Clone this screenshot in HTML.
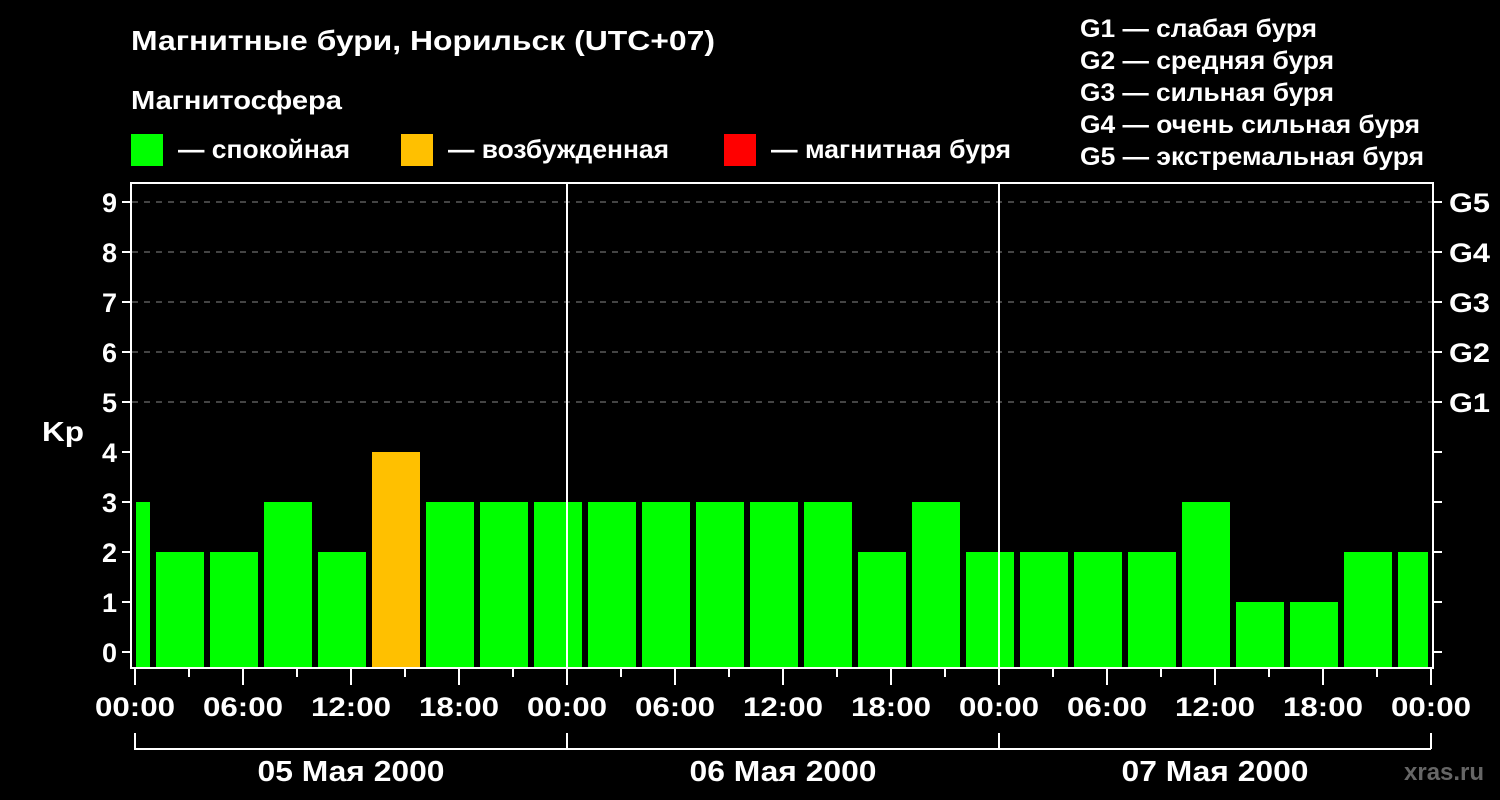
<!DOCTYPE html><html><head><style>body{margin:0;background:#000}svg{display:block}text{font-family:"Liberation Sans",Arial,sans-serif;font-weight:bold;fill:#fff}</style></head><body>
<svg width="1500" height="800" xmlns="http://www.w3.org/2000/svg">
<rect width="1500" height="800" fill="#000"/>
<text x="131" y="50" font-size="28" textLength="584" lengthAdjust="spacingAndGlyphs">Магнитные бури, Норильск (UTC+07)</text>
<text x="131" y="109" font-size="26" textLength="211" lengthAdjust="spacingAndGlyphs">Магнитосфера</text>
<rect x="131" y="134" width="32" height="32" fill="#00ff00"/><text x="178" y="158" font-size="26" textLength="172" lengthAdjust="spacingAndGlyphs">— спокойная</text>
<rect x="401" y="134" width="32" height="32" fill="#ffc000"/><text x="448" y="158" font-size="26" textLength="221" lengthAdjust="spacingAndGlyphs">— возбужденная</text>
<rect x="724" y="134" width="32" height="32" fill="#ff0000"/><text x="771" y="158" font-size="26" textLength="240" lengthAdjust="spacingAndGlyphs">— магнитная буря</text>
<g font-size="25"><text x="1080" y="37" textLength="237" lengthAdjust="spacingAndGlyphs">G1 — слабая буря</text><text x="1080" y="69" textLength="254" lengthAdjust="spacingAndGlyphs">G2 — средняя буря</text><text x="1080" y="101" textLength="254" lengthAdjust="spacingAndGlyphs">G3 — сильная буря</text><text x="1080" y="133" textLength="340" lengthAdjust="spacingAndGlyphs">G4 — очень сильная буря</text><text x="1080" y="165" textLength="344" lengthAdjust="spacingAndGlyphs">G5 — экстремальная буря</text></g>
<g stroke="#888" stroke-width="1" stroke-dasharray="6,6"><line x1="132" y1="202" x2="1433" y2="202"/><line x1="132" y1="252" x2="1433" y2="252"/><line x1="132" y1="302" x2="1433" y2="302"/><line x1="132" y1="352" x2="1433" y2="352"/><line x1="132" y1="402" x2="1433" y2="402"/></g>
<g fill="#00ff00">
<rect x="136" y="502" width="14" height="166"/>
<rect x="156" y="552" width="48" height="116"/><rect x="210" y="552" width="48" height="116"/><rect x="264" y="502" width="48" height="166"/><rect x="318" y="552" width="48" height="116"/>
<rect x="372" y="452" width="48" height="216" fill="#ffc000"/>
<rect x="426" y="502" width="48" height="166"/><rect x="480" y="502" width="48" height="166"/><rect x="534" y="502" width="48" height="166"/><rect x="588" y="502" width="48" height="166"/><rect x="642" y="502" width="48" height="166"/><rect x="696" y="502" width="48" height="166"/><rect x="750" y="502" width="48" height="166"/><rect x="804" y="502" width="48" height="166"/>
<rect x="858" y="552" width="48" height="116"/><rect x="912" y="502" width="48" height="166"/><rect x="966" y="552" width="48" height="116"/><rect x="1020" y="552" width="48" height="116"/><rect x="1074" y="552" width="48" height="116"/><rect x="1128" y="552" width="48" height="116"/><rect x="1182" y="502" width="48" height="166"/><rect x="1236" y="602" width="48" height="66"/><rect x="1290" y="602" width="48" height="66"/><rect x="1344" y="552" width="48" height="116"/><rect x="1398" y="552" width="30" height="116"/>
</g>
<g stroke="#fff" stroke-width="2" fill="none">
<rect x="131" y="183" width="1302" height="485"/>
<line x1="567" y1="183" x2="567" y2="668"/><line x1="999" y1="183" x2="999" y2="668"/>
<path d="M122 202h9M122 252h9M122 302h9M122 352h9M122 402h9M122 452h9M122 502h9M122 552h9M122 602h9M122 652h9"/>
<path d="M1433 202h9M1433 252h9M1433 302h9M1433 352h9M1433 402h9M1433 452h9M1433 502h9M1433 552h9M1433 602h9M1433 652h9"/>
<path d="M135 668v17M189 668v9M243 668v17M297 668v9M351 668v17M405 668v9M459 668v17M513 668v9M567 668v17M621 668v9M675 668v17M729 668v9M783 668v17M837 668v9M891 668v17M945 668v9M999 668v17M1053 668v9M1107 668v17M1161 668v9M1215 668v17M1269 668v9M1323 668v17M1377 668v9M1431 668v17"/>
<path d="M135 733v16h1296M567 733v16M999 733v16M1431 733v16"/>
</g>
<g font-size="27" text-anchor="end"><text x="117" y="212">9</text><text x="117" y="262">8</text><text x="117" y="312">7</text><text x="117" y="362">6</text><text x="117" y="412">5</text><text x="117" y="462">4</text><text x="117" y="512">3</text><text x="117" y="562">2</text><text x="117" y="612">1</text><text x="117" y="662">0</text></g>
<text x="42" y="441" font-size="28" textLength="42" lengthAdjust="spacingAndGlyphs">Kp</text>
<g font-size="27"><text x="1449" y="212" textLength="41" lengthAdjust="spacingAndGlyphs">G5</text><text x="1449" y="262" textLength="41" lengthAdjust="spacingAndGlyphs">G4</text><text x="1449" y="312" textLength="41" lengthAdjust="spacingAndGlyphs">G3</text><text x="1449" y="362" textLength="41" lengthAdjust="spacingAndGlyphs">G2</text><text x="1449" y="412" textLength="41" lengthAdjust="spacingAndGlyphs">G1</text></g>
<g font-size="27" text-anchor="middle"><text x="135" y="716" textLength="80" lengthAdjust="spacingAndGlyphs">00:00</text><text x="243" y="716" textLength="80" lengthAdjust="spacingAndGlyphs">06:00</text><text x="351" y="716" textLength="80" lengthAdjust="spacingAndGlyphs">12:00</text><text x="459" y="716" textLength="80" lengthAdjust="spacingAndGlyphs">18:00</text><text x="567" y="716" textLength="80" lengthAdjust="spacingAndGlyphs">00:00</text><text x="675" y="716" textLength="80" lengthAdjust="spacingAndGlyphs">06:00</text><text x="783" y="716" textLength="80" lengthAdjust="spacingAndGlyphs">12:00</text><text x="891" y="716" textLength="80" lengthAdjust="spacingAndGlyphs">18:00</text><text x="999" y="716" textLength="80" lengthAdjust="spacingAndGlyphs">00:00</text><text x="1107" y="716" textLength="80" lengthAdjust="spacingAndGlyphs">06:00</text><text x="1215" y="716" textLength="80" lengthAdjust="spacingAndGlyphs">12:00</text><text x="1323" y="716" textLength="80" lengthAdjust="spacingAndGlyphs">18:00</text><text x="1431" y="716" textLength="80" lengthAdjust="spacingAndGlyphs">00:00</text>
<text x="351" y="781" font-size="29" textLength="187" lengthAdjust="spacingAndGlyphs">05 Мая 2000</text><text x="783" y="781" font-size="29" textLength="187" lengthAdjust="spacingAndGlyphs">06 Мая 2000</text><text x="1215" y="781" font-size="29" textLength="187" lengthAdjust="spacingAndGlyphs">07 Мая 2000</text></g>
<text x="1404" y="780" font-size="24" style="fill:#666" font-weight="normal">xras.ru</text>
</svg></body></html>
